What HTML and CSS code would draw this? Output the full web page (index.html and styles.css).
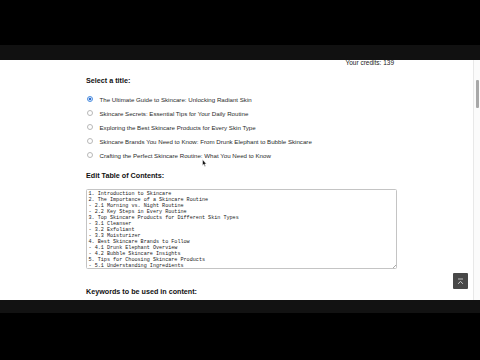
FILE: index.html
```html
<!DOCTYPE html>
<html>
<head>
<meta charset="utf-8">
<link rel="stylesheet" href="styles.css">
</head>
<body>
<div class="bar-top"></div>
<div class="band"></div>
<div class="page">
  <div class="content">
    <div class="column">
      <div class="credits">Your credits: 139</div>
      <h3 class="heading h-select">Select a title:</h3>
      <ul class="titles">
        <li class="title"><span class="radio checked"></span>The Ultimate Guide to Skincare: Unlocking Radiant Skin</li>
        <li class="title"><span class="radio"></span>Skincare Secrets: Essential Tips for Your Daily Routine</li>
        <li class="title"><span class="radio"></span>Exploring the Best Skincare Products for Every Skin Type</li>
        <li class="title"><span class="radio"></span>Skincare Brands You Need to Know: From Drunk Elephant to Bubble Skincare</li>
        <li class="title"><span class="radio"></span>Crafting the Perfect Skincare Routine: What You Need to Know</li>
      </ul>
      <h3 class="heading h-toc">Edit Table of Contents:</h3>
      <div class="toc">1. Introduction to Skincare
2. The Importance of a Skincare Routine
- 2.1 Morning vs. Night Routine
- 2.2 Key Steps in Every Routine
3. Top Skincare Products for Different Skin Types
- 3.1 Cleanser
- 3.2 Exfoliant
- 3.3 Moisturizer
4. Best Skincare Brands to Follow
- 4.1 Drunk Elephant Overview
- 4.2 Bubble Skincare Insights
5. Tips for Choosing Skincare Products
- 5.1 Understanding Ingredients<span class="grip"></span></div>
      <h3 class="heading h-keys">Keywords to be used in content:</h3>
    </div>
    <svg class="cursor" width="5" height="8" viewBox="0 0 5 8"><path d="M0.5 0.5 L0.5 6.5 L1.8 5.3 L2.8 7.5 L3.6 7.1 L2.7 5 L4.4 5 Z" fill="#111" stroke="#fff" stroke-width="0.5"/></svg>
    <div class="to-top">
      <svg width="9" height="9" viewBox="0 0 9 9"><path d="M2 2 H7" stroke="#cfcfcf" stroke-width="0.9"/><path d="M2.2 6.8 L4.5 4.3 L6.8 6.8" fill="none" stroke="#cfcfcf" stroke-width="1"/></svg>
    </div>
  </div>
  <div class="scrollbar"><div class="thumb"></div></div>
</div>
<div class="band band-bottom"></div>
</body>
</html>
```

FILE: styles.css
```css
html, body {
  margin: 0;
  padding: 0;
  background: #000;
  width: 480px;
  height: 360px;
  overflow: hidden;
  font-family: "Liberation Sans", Arial, sans-serif;
}

.bar-top {
  height: 45px;
  background: #000;
}

.band {
  height: 15px;
  background: #111;
}

.band-bottom {
  height: 13px;
  background: #121212;
}

.page {
  height: 240px;
  background: #fff;
  display: flex;
  overflow: hidden;
}

.content {
  flex: 1;
  position: relative;
  overflow: hidden;
}

.column {
  margin-left: 86px;
  width: 311px;
  display: flex;
  flex-direction: column;
}

.credits {
  font-size: 6.5px;
  line-height: 6px;
  color: #222;
  text-align: right;
  padding-right: 3px;
}

.heading {
  margin: 0;
  font-size: 7.2px;
  line-height: 8px;
  font-weight: bold;
  color: #111;
}

.h-select { margin-top: 11px; }
.h-toc { margin-top: 10px; }
.h-keys { margin-top: 19px; }

.titles {
  list-style: none;
  margin: 7px 0 0 0;
  padding: 0;
}

.title {
  display: flex;
  align-items: center;
  height: 14px;
  font-size: 6.15px;
  color: #2a2a2a;
  white-space: nowrap;
}

.radio {
  width: 4px;
  height: 4px;
  border: 0.7px solid #b8b8b8;
  border-radius: 50%;
  margin-left: 1px;
  margin-right: 6.5px;
  background: #fff;
  flex: none;
}

.radio.checked {
  border-color: #4d8fe0;
  background: radial-gradient(circle, #2f6fd0 0 1.3px, #dbe8fb 1.6px);
}

.toc {
  margin-top: 9px;
  height: 80px;
  box-sizing: border-box;
  border: 1px solid #c4c4c4;
  border-radius: 1.5px;
  padding: 0.5px 1.5px;
  font-family: "Liberation Mono", "Courier New", monospace;
  font-size: 5.12px;
  line-height: 6px;
  color: #222;
  white-space: pre;
  overflow: hidden;
  position: relative;
}

.grip {
  position: absolute;
  right: 0.5px;
  bottom: 0.5px;
  width: 3px;
  height: 3px;
  background: linear-gradient(135deg, transparent 45%, #aaa 45% 60%, transparent 60%);
}

.cursor {
  position: absolute;
  left: 202px;
  top: 99px;
}

.to-top {
  position: absolute;
  left: 453px;
  top: 213px;
  width: 15px;
  height: 16px;
  background: #484848;
  border-radius: 1px;
  display: flex;
  align-items: center;
  justify-content: center;
}

.scrollbar {
  width: 6px;
  flex: none;
  border-left: 1px solid #e8e8e8;
  background: #fbfbfb;
  position: relative;
}

.thumb {
  position: absolute;
  left: 2px;
  top: 20px;
  width: 3px;
  height: 28px;
  background: #a8a8a8;
  border-radius: 1px;
}
```
